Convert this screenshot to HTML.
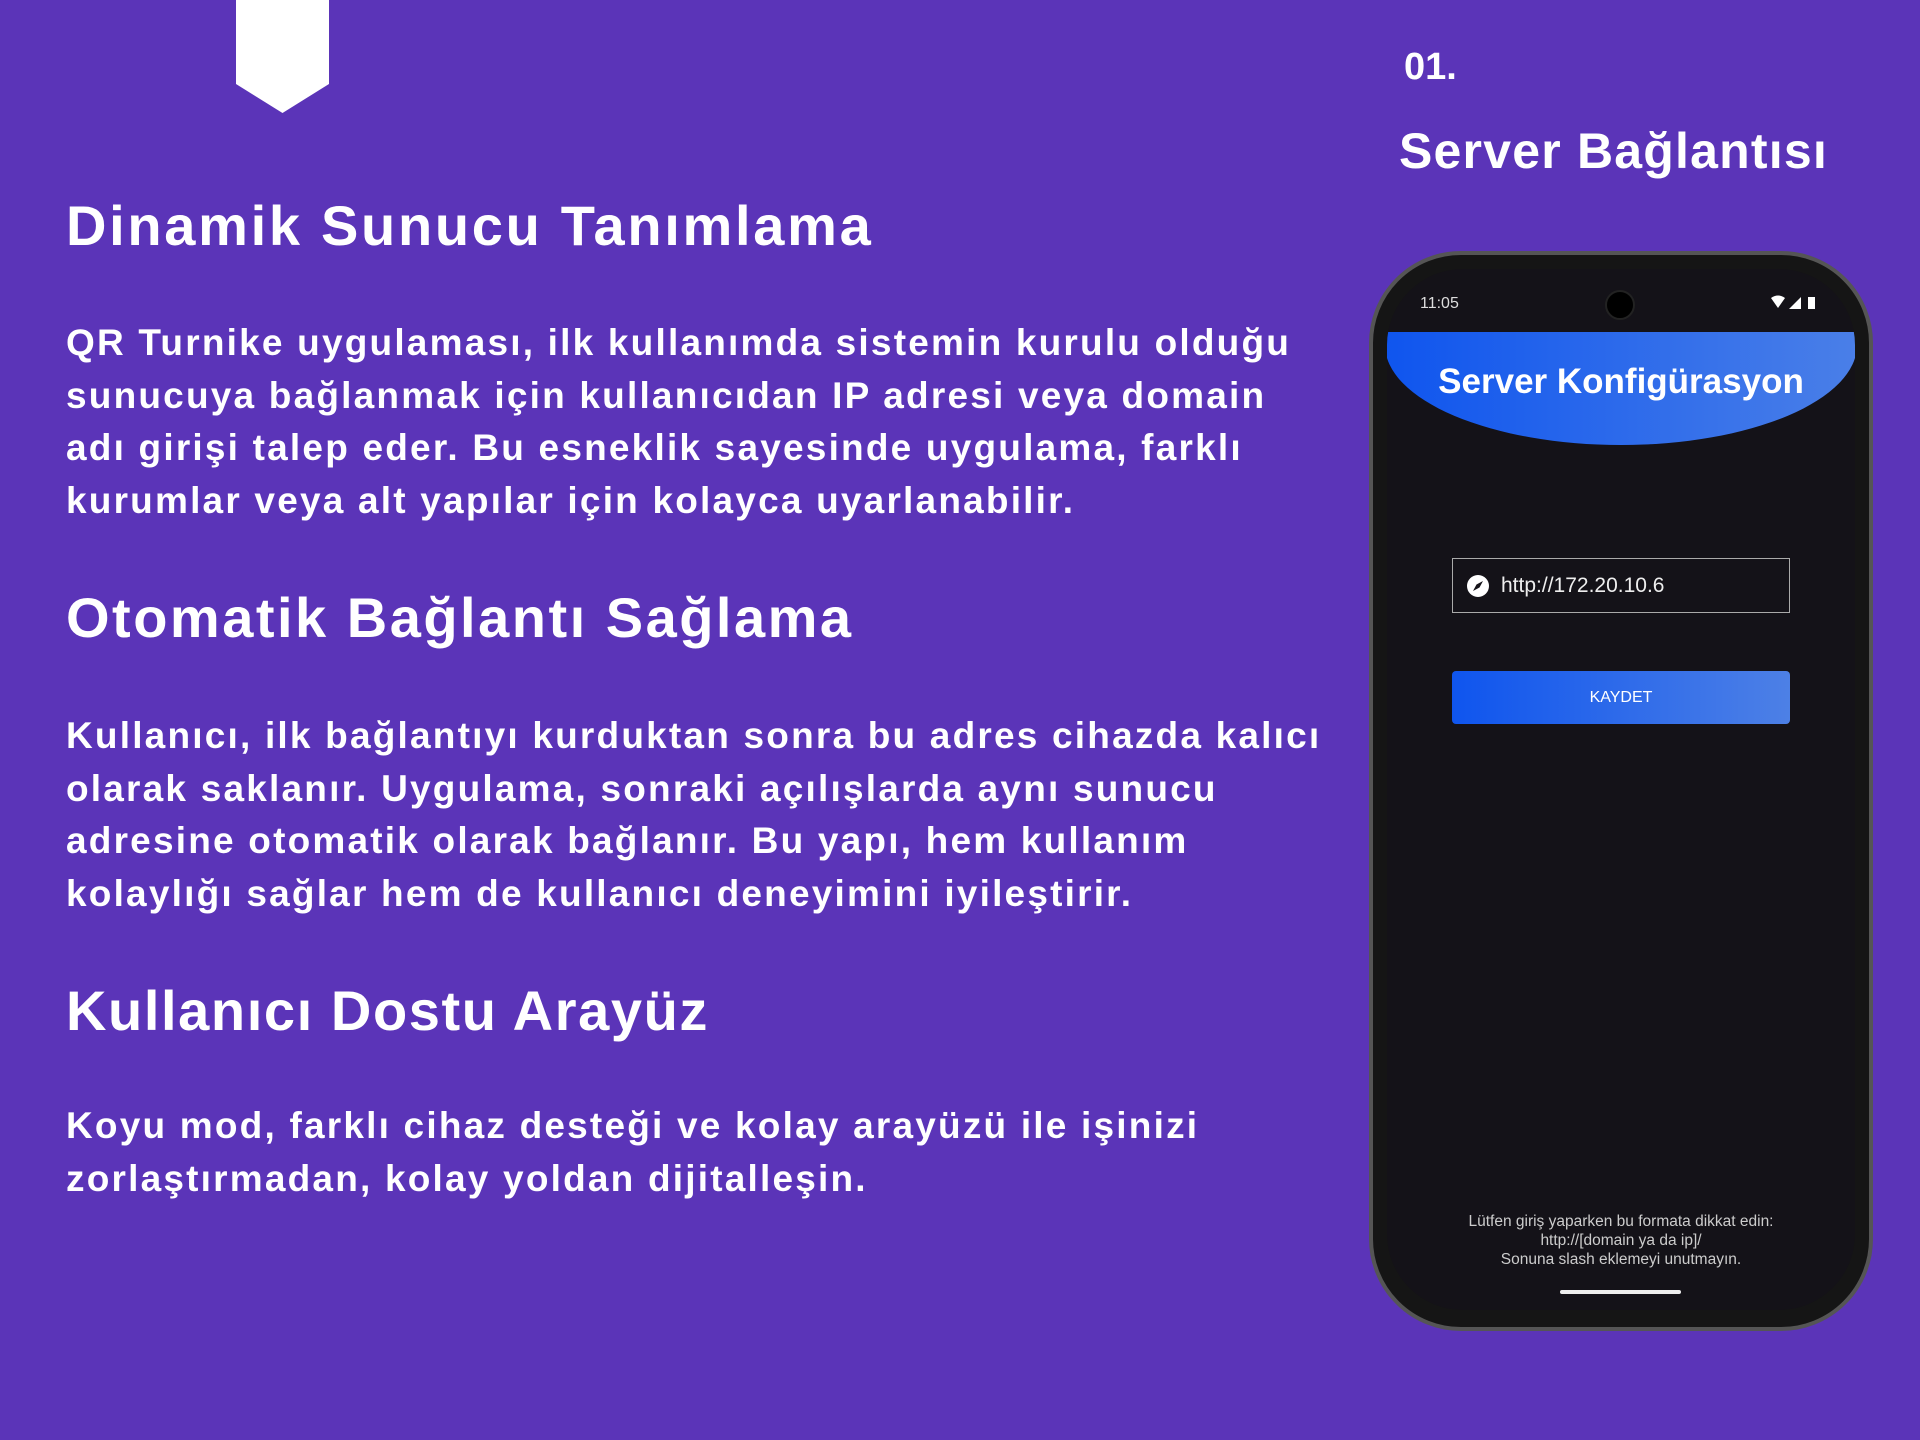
<!DOCTYPE html>
<html><head><meta charset="utf-8"><style>
*{margin:0;padding:0;box-sizing:border-box}
body{width:1920px;height:1440px;background:#5b34b8;position:relative;overflow:hidden;font-family:"Liberation Sans",sans-serif;color:#fff}
.t{position:absolute;left:66px;white-space:nowrap;font-weight:bold}
h1{position:absolute;left:66px;font-size:56px;font-weight:bold;white-space:nowrap;letter-spacing:2.7px}
.p{position:absolute;left:66px;font-size:37px;font-weight:bold;line-height:52.5px;white-space:nowrap;letter-spacing:2.2px}
.phone{position:absolute;left:1369px;top:251px;width:504px;height:1080px;border-radius:92px;background:#151515;border:4px solid #555}
.screen{position:absolute;left:1387px;top:269px;width:468px;height:1041px;border-radius:76px;background:#141218;overflow:hidden}
</style></head><body>
<svg style="position:absolute;left:236px;top:0" width="93" height="114"><polygon points="0,0 93,0 93,84 46.5,113 0,84" fill="#fff"/></svg>
<div class="t" style="left:1404px;top:46px;font-size:38px">01.</div>
<div class="t" style="left:1399px;top:122px;font-size:50px;letter-spacing:1.2px">Server Bağlantısı</div>
<h1 style="top:193px">Dinamik Sunucu Tanımlama</h1>
<div class="p" style="top:317px">QR Turnike uygulaması, ilk kullanımda sistemin kurulu olduğu<br>sunucuya bağlanmak için kullanıcıdan IP adresi veya domain<br>adı girişi talep eder. Bu esneklik sayesinde uygulama, farklı<br>kurumlar veya alt yapılar için kolayca uyarlanabilir.</div>
<h1 style="top:585px;letter-spacing:2.5px">Otomatik Bağlantı Sağlama</h1>
<div class="p" style="top:710px">Kullanıcı, ilk bağlantıyı kurduktan sonra bu adres cihazda kalıcı<br>olarak saklanır. Uygulama, sonraki açılışlarda aynı sunucu<br>adresine otomatik olarak bağlanır. Bu yapı, hem kullanım<br>kolaylığı sağlar hem de kullanıcı deneyimini iyileştirir.</div>
<h1 style="top:978px;letter-spacing:1.6px">Kullanıcı Dostu Arayüz</h1>
<div class="p" style="top:1100px">Koyu mod, farklı cihaz desteği ve kolay arayüzü ile işinizi<br>zorlaştırmadan, kolay yoldan dijitalleşin.</div>

<div class="phone"></div>
<div class="screen">
 <div style="position:absolute;left:33px;top:26px;font-size:16px;color:#ddd">11:05</div>
 <div style="position:absolute;left:218px;top:21px;width:30px;height:30px;border-radius:50%;background:#000;border:2px solid #222"></div>
 <svg style="position:absolute;left:384px;top:26px" width="50" height="16"><path d="M0,3 Q7,-2 14,3 L7,13Z" fill="#fff"/><path d="M18,14 L30,2 L30,14Z" fill="#fff"/><rect x="37" y="2" width="7" height="12" fill="#fff"/></svg>
 <div style="position:absolute;left:-2px;top:63px;width:472px;height:113px;background:linear-gradient(90deg,#0f55ee,#4a7fe8);border-radius:0 0 50% 50% / 0 0 100px 100px"></div>
 <div style="position:absolute;left:0;width:468px;top:93px;text-align:center;font-size:35px;font-weight:bold">Server Konfigürasyon</div>
 <div style="position:absolute;left:65px;top:289px;width:338px;height:55px;border:1.5px solid #aaa"></div>
 <svg style="position:absolute;left:80px;top:306px" width="22" height="22"><circle cx="11" cy="11" r="11" fill="#fff"/><path d="M16,6 L12.5,12.5 L6,16 L9.5,9.5Z" fill="#141218"/></svg>
 <div style="position:absolute;left:114px;top:305px;font-size:21px;color:#eee">http://172.20.10.6</div>
 <div style="position:absolute;left:65px;top:402px;width:338px;height:53px;border-radius:4px;background:linear-gradient(90deg,#0f55ee,#4d80e6);text-align:center;line-height:53px;font-size:16px">KAYDET</div>
 <div style="position:absolute;left:0;width:468px;top:943px;text-align:center;font-size:15.5px;line-height:19px;color:#ccc">Lütfen giriş yaparken bu formata dikkat edin:<br>http://[domain ya da ip]/<br>Sonuna slash eklemeyi unutmayın.</div>
 <div style="position:absolute;left:173px;top:1021px;width:121px;height:4px;border-radius:2px;background:#eee"></div>
</div>
</body></html>
